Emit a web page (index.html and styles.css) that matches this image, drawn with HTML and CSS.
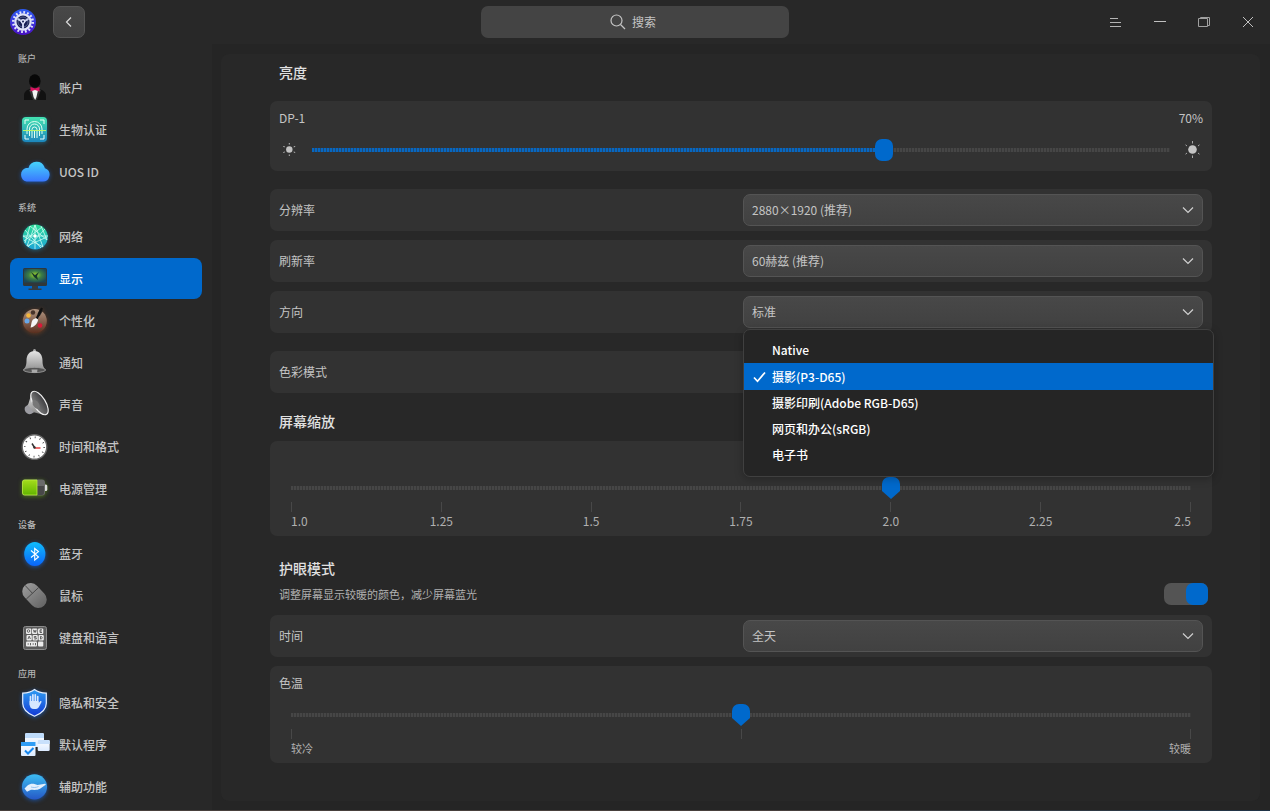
FILE: index.html
```html
<!DOCTYPE html>
<html lang="zh-CN">
<head>
    <meta charset="UTF-8">
    <meta name="viewport" content="width=device-width, initial-scale=1.0">
    <title>控制中心 - 显示</title>
    <link rel="stylesheet" href="styles.css">
</head>
<body>
    <svg width="0" height="0" class="defs" aria-hidden="true">
        <defs>
            <linearGradient id="g-logo" x1="0" y1="0" x2="0" y2="1"><stop offset="0" stop-color="#2c5cf2"/><stop offset="1" stop-color="#4a0fc4"/></linearGradient>
            <linearGradient id="g-finger" x1="0" y1="0" x2="0" y2="1"><stop offset="0" stop-color="#43e3b0"/><stop offset="1" stop-color="#1c86bd"/></linearGradient>
            <linearGradient id="g-cloud" x1="0" y1="0" x2="0" y2="1"><stop offset="0" stop-color="#45d4fb"/><stop offset="1" stop-color="#3a77ff"/></linearGradient>
            <linearGradient id="g-net" x1="0" y1="0" x2="0" y2="1"><stop offset="0" stop-color="#2ddc96"/><stop offset="1" stop-color="#1ea5d8"/></linearGradient>
            <radialGradient id="g-screen" cx="0.5" cy="0.45" r="0.6"><stop offset="0" stop-color="#a4d92c"/><stop offset="0.5" stop-color="#3c7d45"/><stop offset="1" stop-color="#1b4658"/></radialGradient>
            <linearGradient id="g-palette" x1="0" y1="0" x2="0" y2="1"><stop offset="0" stop-color="#b39883"/><stop offset="1" stop-color="#5a2f1f"/></linearGradient>
            <linearGradient id="g-silver" x1="0" y1="0" x2="0" y2="1"><stop offset="0" stop-color="#e6e6e6"/><stop offset="1" stop-color="#858585"/></linearGradient>
            <linearGradient id="g-cone" x1="0" y1="0" x2="1" y2="0"><stop offset="0" stop-color="#808080"/><stop offset="1" stop-color="#3c3c3f"/></linearGradient>
            <linearGradient id="g-green" x1="0" y1="0" x2="0" y2="1"><stop offset="0" stop-color="#a4dc1c"/><stop offset="1" stop-color="#62b500"/></linearGradient>
            <linearGradient id="g-bt" x1="0" y1="0" x2="0" y2="1"><stop offset="0" stop-color="#10bdfb"/><stop offset="1" stop-color="#0a64fa"/></linearGradient>
            <linearGradient id="g-mouse" x1="0" y1="0" x2="0" y2="1"><stop offset="0" stop-color="#999"/><stop offset="1" stop-color="#666"/></linearGradient>
            <linearGradient id="g-shield" x1="0" y1="0" x2="0" y2="1"><stop offset="0" stop-color="#2f9df2"/><stop offset="1" stop-color="#1239d6"/></linearGradient>
            <linearGradient id="g-pane" x1="0" y1="0" x2="0" y2="1"><stop offset="0" stop-color="#fff"/><stop offset="1" stop-color="#dcebff"/></linearGradient>
            <linearGradient id="g-help" x1="0" y1="0" x2="0" y2="1"><stop offset="0" stop-color="#3cbdf3"/><stop offset="1" stop-color="#2558c6"/></linearGradient>
        </defs>
    </svg>

    <header class="titlebar">
        <div class="titlebar-left">
            <svg class="logo" viewBox="0 0 26 26" aria-hidden="true">
                <circle cx="13" cy="13" r="13" fill="url(#g-logo)"/>
                <circle cx="13" cy="13" r="9.7" fill="none" stroke="#dfe3f8" stroke-width="2.6" stroke-dasharray="1.8 2.01"/>
                <circle cx="13" cy="13" r="7.6" fill="#171e52" stroke="#dfe3f8" stroke-width="2.2"/>
                <circle cx="13" cy="13" r="5" fill="none" stroke="#56618f" stroke-width="1"/>
                <path d="M13 13.6v6.400M13 13L7.600 9.800M13 13L18.400 9.800" stroke="#c9cfec" stroke-width="2"/>
                <circle cx="13" cy="12.500" r="2.400" fill="#dfe3f8"/>
                <circle cx="13" cy="12.500" r="1" fill="#171e52"/>
            </svg>
            <button class="back" aria-label="返回">
                <svg width="10" height="12" viewBox="0 0 10 12"><path d="M7 1.500L2.500 6L7 10.500" fill="none" stroke="#dcdcdc" stroke-width="1.200"/></svg>
            </button>
        </div>
        <label class="search">
            <svg width="16" height="16" viewBox="0 0 16 16" aria-hidden="true"><circle cx="6.500" cy="6.500" r="5.500" fill="none" stroke="#c4c4c4" stroke-width="1.200"/><path d="M10.500 10.500L15 15" stroke="#c4c4c4" stroke-width="1.200"/></svg>
            <input type="search" placeholder="搜索" aria-label="搜索">
        </label>
        <div class="window-buttons">
            <button aria-label="菜单"><svg width="12" height="12" viewBox="0 0 12 12"><path d="M0 2.500h8M0 6.500h11M0 10.500h11" stroke="#b4b4b4"/></svg></button>
            <button aria-label="最小化"><svg width="12" height="12" viewBox="0 0 12 12"><path d="M0 5.500h12" stroke="#c0c0c0"/></svg></button>
            <button aria-label="还原"><svg width="12" height="12" viewBox="0 0 12 12"><path d="M.5 2.500h9v8h-9zM2.500 2v-.5h9v8h-1.500" fill="none" stroke="#a0a0a0"/></svg></button>
            <button aria-label="关闭"><svg width="12" height="12" viewBox="0 0 12 12"><path d="M1 1L11 11M11 1L1 11" stroke="#c0c0c0"/></svg></button>
        </div>
    </header>

    <div class="window">
        <nav class="sidebar">
            <h2>账户</h2>
            <a href="#account">
                <svg viewBox="0 0 32 32" aria-hidden="true">
                    <path d="M5 28v-4c0-4 2-6 6-7h9c4 1 7 3 7 7v4z" fill="#111"/>
                    <path d="M10 18l4 10h4l4-10z" fill="#303030"/>
                    <path d="M13 18h6l-1.500 7-1.300 3-1.700-3z" fill="#f2f2f2"/>
                    <ellipse cx="15.800" cy="9" rx="5.800" ry="6.800" fill="#080808"/>
                    <path d="M11.500 15l4.500 1.500 4.500-1.500v4.500l-4.500-1.500-4.500 1.500z" fill="#d8125f"/>
                </svg>
                <span>账户</span>
            </a>
            <a href="#biometric">
                <svg class="glow-teal" viewBox="0 0 32 32" aria-hidden="true">
                    <rect x="3" y="3" width="25" height="25" rx="4" fill="url(#g-finger)"/>
                    <path d="M6 10V6h4M21 6h4v4M25 21v4h-4M10 25H6v-4" fill="none" stroke="#e9fff8"/>
                    <path d="M8 20v-5a7.500 7.500 0 0 1 15 0v5M10.500 22v-7a5 5 0 0 1 10 0v7M13 24v-8.500a2.500 2.500 0 0 1 5 0V24M15.500 16v8" fill="none" stroke="#e4fff4"/>
                    <path d="M4 16.500h23" stroke="#b9f56a" stroke-width="1"/>
                </svg>
                <span>生物认证</span>
            </a>
            <a href="#uosid">
                <svg class="glow-blue" viewBox="0 0 32 32" aria-hidden="true"><path d="M7.500 25.500a7 7 0 0 1-.5-13.500h2.500a8.500 8.500 0 0 1 16-1c0 .8.200 1 1 1.500a6.800 6.800 0 0 1-3 13z" fill="url(#g-cloud)"/></svg>
                <span>UOS ID</span>
            </a>

            <h2>系统</h2>
            <a href="#network">
                <svg class="glow-teal" viewBox="0 0 32 32" aria-hidden="true">
                    <circle cx="16.300" cy="16" r="12.500" fill="url(#g-net)"/>
                    <path d="M16 4v24M4 15h25M6 9l16 18M26 8L9 26M16 4l8 22M16 4L8 25M5 20l18-14M28 19L11 5M8 25l20-9M24 26L4 15M11 5L6 22M22 5l6 14" fill="none" stroke="#cdfdf1" stroke-width=".800"/>
                    <circle cx="16" cy="15" r="1.700" fill="#fff"/>
                </svg>
                <span>网络</span>
            </a>
            <a href="#display" class="active" aria-current="page">
                <svg viewBox="0 0 32 32" aria-hidden="true">
                    <rect x="4" y="5" width="24" height="18" rx="1.500" fill="#30373a"/>
                    <rect x="5" y="6" width="22" height="13.500" fill="url(#g-screen)"/>
                    <path d="M12 9l4 3 4-3-2 4 1 4-4-3z" fill="#17382a"/>
                    <path d="M13 23h6v2.500h3.500v1.500h-13v-1.500H13z" fill="#343b40"/>
                </svg>
                <span>显示</span>
            </a>
            <a href="#personalization">
                <svg class="glow-brown" viewBox="0 0 32 32" aria-hidden="true">
                    <circle cx="15.800" cy="16" r="12" fill="url(#g-palette)"/>
                    <path d="M18.500 9l2.500-5.500 3 2-3.500 6z" fill="#282828"/>
                    <circle cx="14" cy="7.500" r="2.200" fill="#473329"/>
                    <circle cx="9.500" cy="10.500" r="2.300" fill="#f4b63d"/>
                    <circle cx="8" cy="16" r="2.500" fill="#68a7e8"/>
                    <circle cx="21" cy="20.500" r="2.300" fill="#dc1738"/>
                    <path d="M17.500 14L23 3" stroke="#111" stroke-width="2.200"/>
                    <path d="M14 14.500l3-1.500 2 1.500c0 3-3 7.500-7.500 8 .8-1.500.5-5.500 2.500-8z" fill="#f5f5f5"/>
                </svg>
                <span>个性化</span>
            </a>
            <a href="#notification">
                <svg viewBox="0 0 32 32" aria-hidden="true">
                    <circle cx="15.500" cy="3.500" r="1.500" fill="#aaa"/>
                    <path d="M15.500 4c-5 0-8 4-8 9.500 0 5-1 7-3.500 9.500 2 3.500 21 3.500 23 0-2.500-2.500-3.500-4.500-3.500-9.500C23.500 8 20.500 4 15.500 4z" fill="url(#g-silver)"/>
                    <ellipse cx="15.500" cy="23" rx="11" ry="2.600" fill="#555" stroke="#9c9c9c" stroke-width=".800"/>
                    <path d="M12.500 22.500h6l-.5 3.200h-5z" fill="#aaa"/>
                </svg>
                <span>通知</span>
            </a>
            <a href="#sound">
                <svg viewBox="0 0 32 32" aria-hidden="true">
                    <path d="M6 18c-1.500 4 2 8 6 7l5-3-6-8z" fill="#9c9ca2"/>
                    <path d="M13 3L9 16l5 7 11 3z" fill="url(#g-silver)"/>
                    <ellipse cx="20.500" cy="14" rx="6" ry="13.300" transform="rotate(-32 20.500 14)" fill="url(#g-cone)" stroke="#f0f0f0" stroke-width="1.200"/>
                    <ellipse cx="17" cy="15.500" rx="3" ry="5" transform="rotate(-32 17 15.500)" fill="#777"/>
                </svg>
                <span>声音</span>
            </a>
            <a href="#datetime">
                <svg viewBox="0 0 32 32" aria-hidden="true">
                    <circle cx="15.500" cy="16" r="12.300" fill="#fff" stroke="#666" stroke-width="1.400"/>
                    <circle cx="15.500" cy="16" r="9.700" fill="none" stroke="#333" stroke-width="1.700" stroke-dasharray=".800 4.279"/>
                    <path d="M15.500 16.500L13 12.500" stroke="#333" stroke-width="1.500"/>
                    <path d="M15.500 17h6" stroke="#e84040" stroke-width="1.500"/>
                    <circle cx="15.500" cy="16.500" r="1.200" fill="#333"/>
                </svg>
                <span>时间和格式</span>
            </a>
            <a href="#power">
                <svg class="glow-green" viewBox="0 0 32 32" aria-hidden="true">
                    <rect x="25" y="11.500" width="3.300" height="6.500" rx="1.500" fill="#ddd"/>
                    <rect x="3" y="6.500" width="23" height="16" rx="3" fill="#6a6a6a"/>
                    <path d="M18 13v9h5a2 2 0 0 0 2-2v-7z" fill="#484848"/>
                    <path d="M5.500 7H18v15H5.500a2 2 0 0 1-2-2V9a2 2 0 0 1 2-2z" fill="url(#g-green)" stroke="#b9ec3c" stroke-width=".800"/>
                </svg>
                <span>电源管理</span>
            </a>

            <h2>设备</h2>
            <a href="#bluetooth">
                <svg class="glow-blue" viewBox="0 0 32 32" aria-hidden="true">
                    <ellipse cx="15.800" cy="16" rx="10.600" ry="12" fill="url(#g-bt)"/>
                    <path d="M12 12.500l7.500 6.500-3.800 3V10.500l3.800 3L12 19.500" fill="none" stroke="#fff" stroke-width="1.100"/>
                </svg>
                <span>蓝牙</span>
            </a>
            <a href="#mouse">
                <svg viewBox="0 0 32 32" aria-hidden="true">
                    <g transform="rotate(-43 15.500 15.500)">
                        <rect x="7" y="1.500" width="17" height="28" rx="8.500" fill="url(#g-mouse)"/>
                        <path d="M7 12.500h17M15.500 1.500v11" stroke="#444" stroke-width=".900"/>
                    </g>
                </svg>
                <span>鼠标</span>
            </a>
            <a href="#keyboard">
                <svg viewBox="0 0 32 32" aria-hidden="true">
                    <rect x="4.500" y="4.500" width="23" height="23" rx="2" fill="#5c5c5c" stroke="#8c8c8c"/>
                    <g fill="#ececec">
                        <rect x="7" y="6.500" width="5.300" height="5.500" rx="1"/><rect x="13" y="6.500" width="5.300" height="5.500" rx="1"/><rect x="19" y="6.500" width="5.300" height="5.500" rx="1"/>
                        <rect x="7.500" y="13" width="5.300" height="5.500" rx="1"/><rect x="13.500" y="13" width="5.300" height="5.500" rx="1"/><rect x="19.500" y="13" width="5.300" height="5.500" rx="1"/>
                        <rect x="7" y="19.500" width="11" height="5" rx="1"/><rect x="19" y="19.500" width="5.300" height="5" rx="1"/>
                    </g>
                    <g fill="none" stroke="#555" stroke-width=".900">
                        <circle cx="9.500" cy="9" r="1.300"/><path d="M14.500 7.800l.7 2.600.7-2 .7 2 .6-2.600M23 7.800h-2v2.700h2M21 9.100h1.700"/>
                        <path d="M9 17l1.200-2.800 1.200 2.800M17.300 14.500h-2v1.300h2V17h-2M21.500 14.300v2.800c2.200 0 2.200-2.800 0-2.800z"/>
                        <path d="M8.500 22h1.500M11.500 21v2.300M13.500 22h1.500M16.500 21v2.300"/>
                    </g>
                </svg>
                <span>键盘和语言</span>
            </a>

            <h2>应用</h2>
            <a href="#privacy">
                <svg class="glow-blue" viewBox="0 0 32 32" aria-hidden="true">
                    <path d="M15.500 2.500c3.500 2.700 7 3.500 11.800 3.700v10c0 6.500-5.500 10.500-11.800 13-6.300-2.500-11.800-6.500-11.800-13v-10c4.800-.2 8.300-1 11.800-3.700z" fill="url(#g-shield)" stroke="#e6efff" stroke-width="1.200"/>
                    <path d="M11.500 9.500v8M13.900 7.800v9M16.300 7.800v9M18.700 9.500v8" stroke="#d5e7ff" stroke-width="1.700" stroke-linecap="round"/>
                    <path d="M10.600 14h9v2l1.400-1.500c1-1 2 0 1.300 1-1.500 2.500-2.300 6.300-5.300 6.500h-2c-3 0-4.400-2-4.400-5z" fill="#d5e7ff"/>
                </svg>
                <span>隐私和安全</span>
            </a>
            <a href="#default">
                <svg viewBox="0 0 32 32" aria-hidden="true">
                    <rect x="6" y="4" width="19" height="14" rx="1.500" fill="url(#g-pane)"/><path d="M6 9V5.500A1.500 1.500 0 0 1 7.500 4h16A1.500 1.500 0 0 1 25 5.500V9z" fill="#bfdcfb"/>
                    <rect x="18.700" y="11" width="12" height="11" rx="1.300" fill="url(#g-pane)"/><path d="M18.700 15v-2.700a1.300 1.300 0 0 1 1.300-1.300h9.400a1.300 1.300 0 0 1 1.300 1.300V15z" fill="#c8e0fb"/>
                    <rect x="2" y="13" width="14.500" height="14" rx="1" fill="url(#g-pane)"/><path d="M2 17V13h14.500v4z" fill="#2f9df5"/>
                    <path d="M6 21.500l3 3 5.500-5.500" fill="none" stroke="#1787ee" stroke-width="2"/>
                </svg>
                <span>默认程序</span>
            </a>
            <a href="#assistive">
                <svg class="glow-blue" viewBox="0 0 32 32" aria-hidden="true">
                    <circle cx="15.500" cy="15.800" r="12.600" fill="url(#g-help)"/>
                    <path d="M5.500 17.500l3-3c2-1.300 4-2 7-1.500l3 1 7.500-1.300c1.200 0 .7 1.300 0 1.600l-5 3.500c-2.500 1.500-6 1.200-9 1l-4 2z" fill="#e4f0fd"/>
                    <path d="M12 16c2.500.8 5 .7 7.500-.5" fill="none" stroke="#84b8ec" stroke-width=".800"/>
                </svg>
                <span>辅助功能</span>
            </a>
        </nav>

        <main class="content">
            <h1>亮度</h1>
            <section class="card brightness">
                <div class="card-head">
                    <label for="brightness">DP-1</label>
                    <output for="brightness">70%</output>
                </div>
                <div class="brightness-row">
                    <svg width="20" height="20" viewBox="0 0 20 20" aria-hidden="true"><circle cx="10.300" cy="9.500" r="3.200" fill="#c4c4c4"/><path d="M10.300 3v1.500M10.300 14.500v1.500M4.300 6.500l1.500.3M4.300 12.500l1.500-.5M16.200 6.500l-1.500.3M16.200 12.500l-1.500-.5" stroke="#b4b4b4"/></svg>
                    <div class="slider" style="--fill: 66.7%">
                        <input type="range" id="brightness" min="10" max="100" value="70">
                    </div>
                    <svg width="20" height="20" viewBox="0 0 20 20" aria-hidden="true"><circle cx="9.500" cy="9.500" r="4.300" fill="#c4c4c4"/><path d="M9.500 1v2.500M9.500 15.500v2.500M2.500 4.800l1.500 1.200M2.500 14.200l1.500-1.200M16.500 4.800l-1.500 1.200M16.500 14.200l-1.500-1.200" stroke="#a8a8a8"/></svg>
                </div>
            </section>

            <div class="card row first">
                <label for="resolution">分辨率</label>
                <select id="resolution"><option>2880×1920 (推荐)</option></select>
            </div>
            <div class="card row">
                <label for="refresh">刷新率</label>
                <select id="refresh"><option>60赫兹 (推荐)</option></select>
            </div>
            <div class="card row">
                <label for="rotate">方向</label>
                <select id="rotate"><option>标准</option></select>
            </div>
            <div class="card row color-mode">
                <span>色彩模式</span>
                <div class="popup" role="listbox" aria-label="色彩模式">
                    <button role="option">Native</button>
                    <button role="option" class="selected" aria-selected="true">
                        <svg width="13" height="12" viewBox="0 0 13 12" aria-hidden="true"><path d="M1 6.500L4.500 10.300L12 1.500" fill="none" stroke="#fff" stroke-width="1.700"/></svg>摄影(P3-D65)</button>
                    <button role="option">摄影印刷(Adobe RGB-D65)</button>
                    <button role="option">网页和办公(sRGB)</button>
                    <button role="option">电子书</button>
                </div>
            </div>

            <h1 class="scale-title">屏幕缩放</h1>
            <section class="card ticked scale">
                <div class="slider">
                    <input type="range" aria-label="屏幕缩放" min="1" max="2.5" step="0.25" value="2">
                </div>
                <div class="ticks">
                    <span>1.0</span><span>1.25</span><span>1.5</span><span>1.75</span><span>2.0</span><span>2.25</span><span>2.5</span>
                </div>
            </section>

            <h1 class="eye-title">护眼模式</h1>
            <div class="eye-row">
                <label for="eye">调整屏幕显示较暖的颜色，减少屏幕蓝光</label>
                <input type="checkbox" id="eye" class="switch" checked>
            </div>
            <div class="card row">
                <label for="time">时间</label>
                <select id="time"><option>全天</option></select>
            </div>
            <section class="card ticked temperature">
                <label for="temperature">色温</label>
                <div class="slider">
                    <input type="range" id="temperature" min="0" max="100" value="50">
                </div>
                <div class="ticks">
                    <span>较冷</span><span></span><span>较暖</span>
                </div>
            </section>
        </main>
    </div>
</body>
</html>
```
FILE: styles.css
```css
* {
    box-sizing: border-box;
}

body {
    margin: 0;
    min-height: 100vh;
    display: flex;
    flex-direction: column;
    background-color: #252525;
    color: #c4c4c4;
    font-family: "Noto Sans CJK SC", "Noto Sans", sans-serif;
    font-size: 12px;
    line-height: 16px;
}

/* thin line of desktop under the window */
body::after {
    content: "";
    height: 1px;
    background: linear-gradient(90deg, #48403c 0 60%, #1f3346);
}

button,
input,
select {
    font: inherit;
    color: inherit;
}

button {
    padding: 0;
    border: none;
    background: none;
}

svg {
    flex: none;
}

.defs {
    display: block;
}

/* title bar */
.titlebar {
    display: grid;
    grid-template-columns: 1fr 308px 1fr;
    align-items: center;
    height: 44px;
    background-color: #282828;
}

.titlebar-left {
    display: flex;
    align-items: center;
    gap: 17px;
    padding-left: 10px;
}

.logo {
    width: 26px;
    height: 26px;
}

.back {
    width: 32px;
    height: 32px;
    display: flex;
    align-items: center;
    justify-content: center;
    border: 1px solid #545454;
    border-radius: 7px;
    background: linear-gradient(#484848, #414141);
}

.search {
    height: 32px;
    display: flex;
    align-items: center;
    gap: 6px;
    padding-left: calc(50% - 25px);
    border-radius: 7px;
    background-color: #444;
}

.search input {
    flex: 1;
    min-width: 0;
    padding: 0;
    border: none;
    outline: none;
    background: none;
}

.search input::placeholder {
    color: #c4c4c4;
}

.window-buttons {
    display: flex;
    justify-content: flex-end;
}

.window-buttons button {
    width: 44px;
    height: 44px;
    display: flex;
    align-items: center;
    justify-content: center;
}

.window {
    flex: 1;
    display: flex;
}

/* sidebar */
.sidebar {
    width: 212px;
    display: flex;
    flex-direction: column;
    gap: 1px;
    padding: 0 10px;
    background-color: #282828;
    font-weight: 500;
}

.sidebar h2 {
    margin: 0;
    padding: 8px 8px 0;
    font-size: 9px;
    line-height: 14px;
    font-weight: 500;
    color: #b4b4b4;
}

.sidebar a {
    height: 41px;
    display: flex;
    align-items: center;
    gap: 8px;
    padding: 0 9px;
    border-radius: 8px;
    color: #c4c4c4;
    text-decoration: none;
}

.sidebar a svg {
    width: 32px;
    height: 32px;
}

.sidebar a.active {
    background-color: #0069cc;
    color: #fff;
}

.glow-teal {
    filter: drop-shadow(0 1px 2px rgba(28, 150, 200, 0.5));
}

.glow-blue {
    filter: drop-shadow(0 1px 2px rgba(20, 110, 240, 0.6));
}

.glow-brown {
    filter: drop-shadow(0 1px 2px rgba(140, 70, 30, 0.6));
}

.glow-green {
    filter: drop-shadow(0 1px 2px rgba(110, 190, 10, 0.5));
}

/* content */
.content {
    flex: 1;
    min-width: 0;
    margin: 10px 10px 9px 9px;
    padding: 8px 48px 0 49px;
    border-radius: 8px;
    background-color: #282828;
}

h1 {
    margin: 0 9px 19px;
    font-size: 14px;
    font-weight: 500;
    line-height: 20px;
    color: #e0e0e0;
}

.card {
    margin-top: 9px;
    border-radius: 7px;
    background-color: #323232;
}

.row {
    display: grid;
    grid-template-columns: 1fr 1fr;
    align-items: center;
    gap: 4px;
    min-height: 42px;
    padding: 5px 9px;
}

.row.first,
.row.color-mode {
    margin-top: 18px;
}

select {
    appearance: none;
    height: 32px;
    padding: 0 8px;
    border: 1px solid #545454;
    border-radius: 7px;
    background: url("data:image/svg+xml,%3Csvg xmlns='http://www.w3.org/2000/svg' width='12' height='8'%3E%3Cpath d='M1 1.500L6 6.500L11 1.500' fill='none' stroke='%23d0d0d0' stroke-width='1.200'/%3E%3C/svg%3E") no-repeat right 8px center, linear-gradient(#484848, #414141);
}

/* sliders */
.slider {
    flex: 1;
    height: 22px;
    display: flex;
    align-items: center;
    background:
        repeating-linear-gradient(90deg, #0767c0 0 2px, #1d4a78 2px 3px) no-repeat left center / var(--fill, 0) 4px,
        repeating-linear-gradient(90deg, #464646 0 2px, #383838 2px 3px) no-repeat left center / 100% 4px;
}

.slider input {
    appearance: none;
    flex: 1;
    min-width: 0;
    height: 22px;
    margin: 0 -9px;
    background: none;
}

.slider input::-webkit-slider-thumb {
    appearance: none;
    width: 18px;
    height: 22px;
    border-radius: 7px;
    background-color: #0069cc;
}

.ticked .slider input::-webkit-slider-thumb {
    border-radius: 7px 7px 0 0;
    clip-path: polygon(0 0, 100% 0, 100% 64%, 50% 100%, 0 64%);
}

.brightness {
    margin-top: 0;
    padding: 9px 9px 10px;
}

.card-head {
    display: flex;
    justify-content: space-between;
}

.brightness-row {
    display: flex;
    align-items: center;
    gap: 13px;
    margin-top: 13px;
}

.ticked {
    padding: 9px 21px 7px;
}

.ticked.scale {
    padding-top: 36px;
}

.ticks {
    display: flex;
    justify-content: space-between;
    margin-top: 3px;
    color: #b0b0b0;
}

.ticks span {
    width: 1px;
    display: flex;
    flex-direction: column;
    align-items: center;
    white-space: nowrap;
}

.ticks span::before {
    content: "";
    width: 1px;
    height: 10px;
    margin-bottom: 1px;
    background-color: #484848;
}

.ticks span:first-child {
    align-items: flex-start;
}

.ticks span:last-child {
    align-items: flex-end;
}

.temperature label {
    display: block;
    margin: 0 -12px 13px;
}

.temperature .ticks {
    font-size: 11px;
}

.scale-title {
    margin: 18px 9px 10px;
}

.eye-title {
    margin: 22px 9px 5px;
}

.eye-row {
    display: flex;
    align-items: center;
    justify-content: space-between;
    margin-bottom: 10px;
    padding: 0 4px 0 9px;
    font-size: 11px;
    color: #b0b0b0;
}

.switch {
    appearance: none;
    width: 44px;
    height: 22px;
    margin: 0;
    border-radius: 7px;
    background-color: #545454;
    display: flex;
}

.switch::before {
    content: "";
    width: 22px;
    border-radius: 7px;
    background-color: #0069cc;
}

.switch:checked {
    justify-content: flex-end;
}

/* colour mode menu */
.color-mode {
    position: relative;
}

.popup {
    position: absolute;
    z-index: 1;
    top: -22px;
    left: calc(50% + 2px);
    right: -2px;
    display: flex;
    flex-direction: column;
    padding: 7px 0 8px;
    border: 1px solid #404040;
    border-radius: 7px;
    background-color: #252525;
    box-shadow: 0 2px 8px rgba(0, 0, 0, 0.25);
    color: #fff;
    font-weight: 500;
}

.popup button {
    height: 26px;
    display: flex;
    align-items: center;
    padding-left: 28px;
}

.popup .selected {
    height: 27px;
    gap: 6px;
    padding-left: 9px;
    background-color: #0069cc;
}
```
